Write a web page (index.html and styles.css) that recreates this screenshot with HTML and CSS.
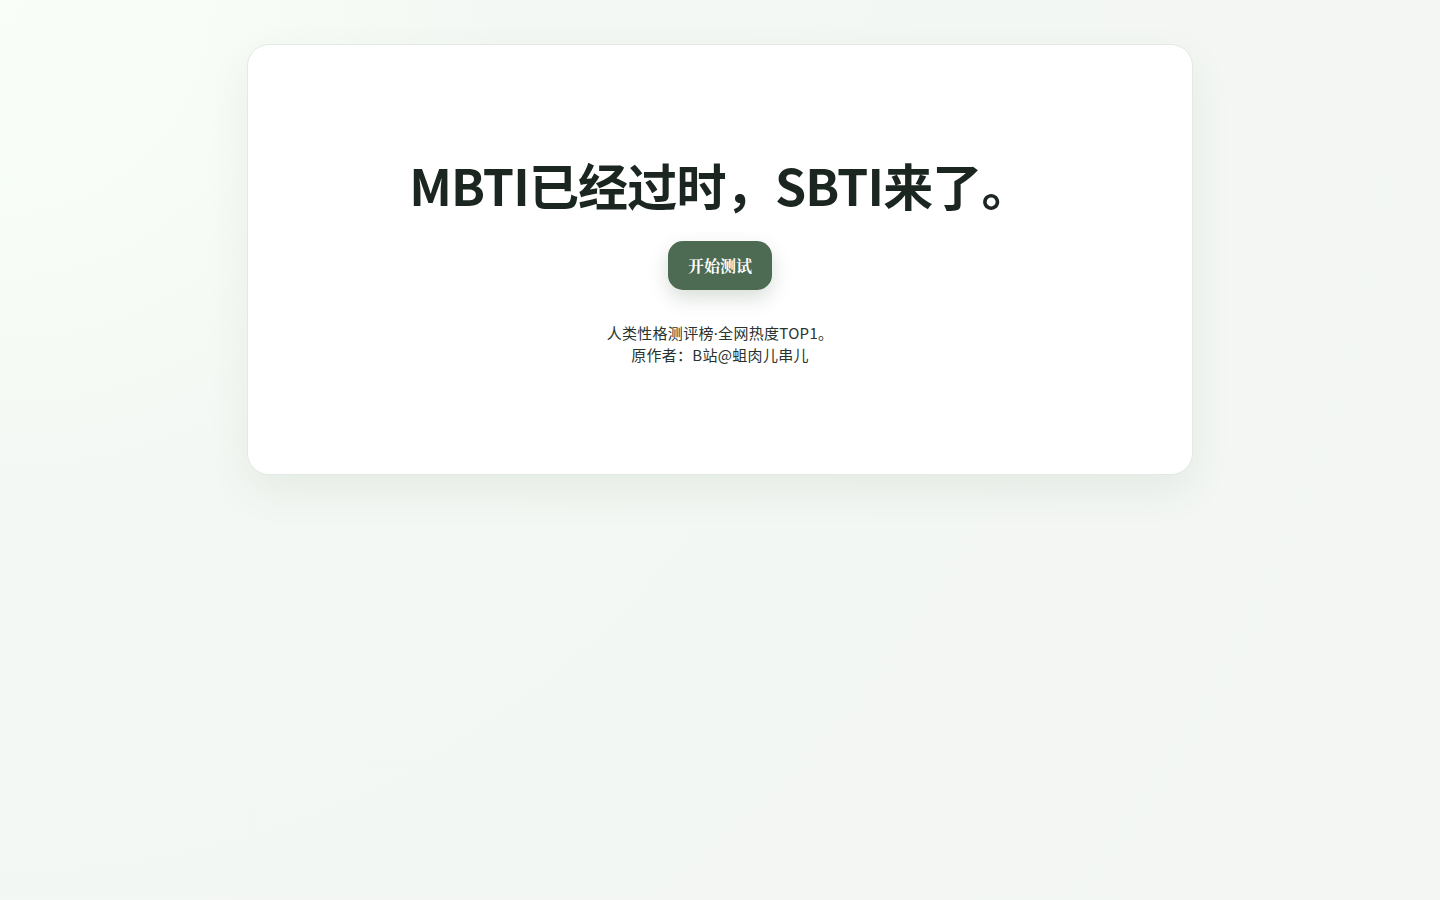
FILE: index.html
```html
<!DOCTYPE html>
<html lang="zh-CN">
<head>
<meta charset="utf-8">
<title>SBTI</title>
<link rel="stylesheet" href="styles.css">
</head>
<body>
<main class="page">
  <section class="card">
    <h1 class="title">MBTI已经过时，SBTI来了。</h1>
    <button class="start">开始测试</button>
    <p class="note">人类性格测评榜<span class="dot">·</span>全网热度TOP1。<br>原作者：B站@蛆肉儿串儿</p>
  </section>
</main>
</body>
</html>
```

FILE: styles.css
```css
html, body {
  margin: 0;
  padding: 0;
  height: 100%;
}
body {
  background: radial-gradient(circle at 0 0, #f9fff8 0, #f4f8f4 30%, #f3f6f3 100%);
  font-family: "Noto Sans CJK SC", "Noto Sans", sans-serif;
  color: #1d2a22;
}
.page {
  display: flex;
  justify-content: center;
  padding-top: 44px;
}
.card {
  width: 946px;
  height: 431px;
  box-sizing: border-box;
  background: #ffffff;
  border: 1px solid #e3e9e3;
  border-radius: 22px;
  box-shadow: 0 16px 40px rgba(60, 90, 65, 0.08);
  display: flex;
  flex-direction: column;
  align-items: center;
}
.title {
  margin: 107px 0 0;
  font-size: 50px;
  font-weight: 700;
  line-height: 64px;
  letter-spacing: -0.8px;
  color: #1b2620;
}
.start {
  margin-top: 25px;
  width: 104px;
  height: 49px;
  border: none;
  border-radius: 15px;
  background: #4d6a52;
  color: #ffffff;
  font-family: "Noto Serif CJK SC", "Liberation Serif", serif;
  font-weight: 700;
  font-size: 16px;
  box-shadow: 0 8px 20px rgba(40, 70, 45, 0.18);
  cursor: pointer;
}
.note {
  margin: 32px 0 0;
  text-align: center;
  font-size: 15px;
  line-height: 21px;
  letter-spacing: 0.3px;
  color: #2a332d;
}
.dot {
  font-family: "Noto Sans", sans-serif;
}
```
